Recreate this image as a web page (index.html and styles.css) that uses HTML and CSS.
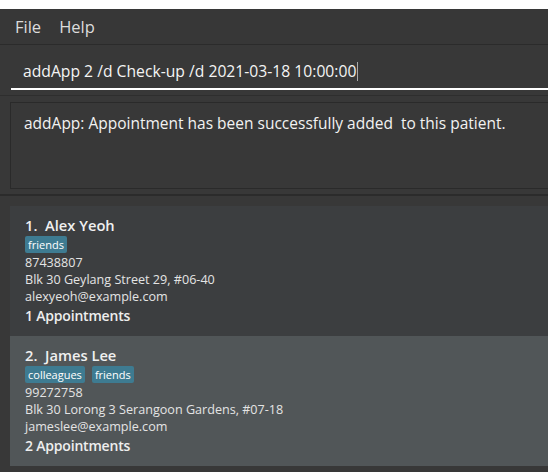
FILE: index.html
```html
<!DOCTYPE html>
<html>
<head>
<meta charset="utf-8">
<link rel="stylesheet" href="styles.css">
</head>
<body>
<div class="titlestrip"></div>
<div class="menubar"><span class="menu">File</span><span class="menu">Help</span></div>
<div class="command">
  <div class="cmdfield"><span class="cmdtext">addApp 2 /d Check-up /d 2021-03-18 10:00:00</span><span class="caret"></span></div>
</div>
<div class="result">
  <div class="resultbox">addApp: Appointment has been successfully added  to this patient.</div>
</div>
<div class="list">
  <div class="card">
    <div class="name">1.&nbsp; Alex Yeoh</div>
    <div class="tags"><span class="tag">friends</span></div>
    <div class="line">87438807</div>
    <div class="line">Blk 30 Geylang Street 29, #06-40</div>
    <div class="line">alexyeoh@example.com</div>
    <div class="appts">1 Appointments</div>
  </div>
  <div class="card alt">
    <div class="name">2.&nbsp; James Lee</div>
    <div class="tags"><span class="tag">colleagues</span><span class="tag">friends</span></div>
    <div class="line">99272758</div>
    <div class="line">Blk 30 Lorong 3 Serangoon Gardens, #07-18</div>
    <div class="line">jameslee@example.com</div>
    <div class="appts">2 Appointments</div>
  </div>
</div>
</body>
</html>
```
FILE: styles.css
```css
html, body {
  margin: 0;
  padding: 0;
  width: 548px;
  height: 472px;
  overflow: hidden;
  background: #383838;
  font-family: "Open Sans", "Noto Sans", sans-serif;
}
.titlestrip {
  height: 9px;
  background: #ffffff;
}
.menubar {
  height: 35px;
  background: #373737;
  border-bottom: 1px solid #2b2b2b;
  display: flex;
  align-items: center;
  padding-left: 15px;
  gap: 18px;
}
.menu {
  color: #dcdcdc;
  font-size: 16.5px;
}
.command {
  background: #383838;
  border-bottom: 1px solid #2e2e2e;
  padding-left: 11px;
  display: flex;
  flex-direction: column;
  justify-content: flex-end;
  padding-bottom: 5px;
  box-sizing: border-box;
  height: 51px;
}
.cmdfield {
  border-bottom: 2px solid #ffffff;
  height: 34px;
  display: flex;
  align-items: center;
  padding-left: 12px;
}
.cmdtext {
  color: #f4f4f4;
  font-size: 15.7px;
}
.caret {
  width: 1px;
  height: 19px;
  background: #aaaaaa;
  margin-left: 1px;
}
.result {
  height: 100px;
  background: #383838;
  border-bottom: 2px solid #2b2b2b;
  padding: 6px 0 0 10px;
  box-sizing: border-box;
}
.resultbox {
  height: 87px;
  box-sizing: border-box;
  border: 1px solid #2a2a2a;
  border-right: none;
  color: #f2f2f2;
  font-size: 15.5px;
  white-space: pre;
  padding: 9px 0 0 13px;
}
.list {
  padding: 10px 0 0 10px;
  display: flex;
  flex-direction: column;
}
.card {
  height: 130px;
  box-sizing: border-box;
  background: #3c3e40;
  padding: 8px 0 0 15px;
  color: #e8e8e8;
}
.card.alt {
  background: #515658;
}
.name {
  font-weight: 600;
  font-size: 14.7px;
  color: #f0f0f0;
  height: 22px;
  line-height: 22px;
}
.tags {
  display: flex;
  gap: 7px;
  height: 18px;
}
.tag {
  background: #3e7b91;
  color: #ffffff;
  font-size: 11px;
  line-height: 17px;
  height: 17px;
  padding: 0 3px;
  border-radius: 2px;
}
.line {
  font-size: 12.6px;
  line-height: 17px;
  color: #e4e4e4;
}
.appts {
  font-size: 14px;
  letter-spacing: -0.2px;
  font-weight: 600;
  line-height: 22px;
  color: #eeeeee;
}
```
